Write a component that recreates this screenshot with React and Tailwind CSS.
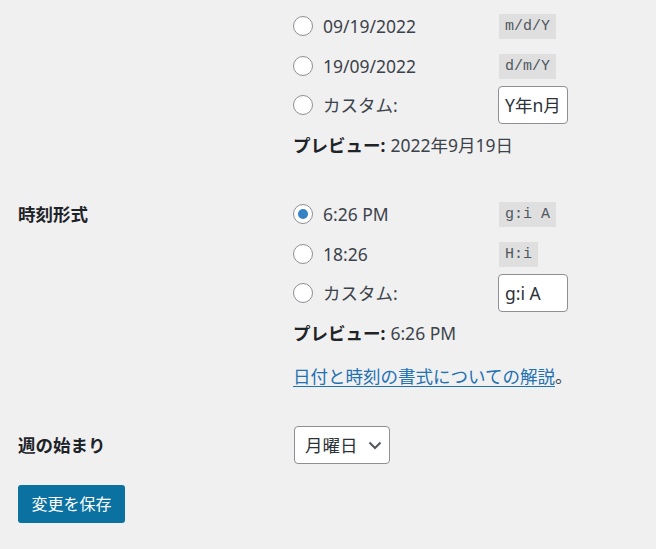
import React from "react";

const font = { fontFamily: '"Segoe UI", "Noto Sans", "Noto Sans CJK JP", sans-serif' };

function Radio({ checked }) {
  return (
    <span className="w-[20px] h-[20px] rounded-full border border-[#8c8f94] bg-white flex items-center justify-center shrink-0">
      {checked && <span className="w-[10px] h-[10px] rounded-full bg-[#3582c4]" />}
    </span>
  );
}

function Option({ checked, label, code, input, h = "h-[40px]" }) {
  return (
    <div className={`flex items-center ${h}`}>
      <div className="flex items-center w-[206px]">
        <Radio checked={checked} />
        <span className="ml-[10px] text-[17.5px] text-[#3c434a]">{label}</span>
      </div>
      {code && (
        <code className="font-['Liberation_Mono',monospace] text-[15px] leading-[25px] h-[25px] px-[6px] bg-[#dfdfe0] text-[#50575e]">
          {code}
        </code>
      )}
      {input && (
        <div className="w-[70px] h-[38px] -ml-[1px] border border-[#8c8f94] rounded-[4px] bg-white flex items-center pl-[6px] overflow-hidden text-[17.5px] text-[#2c3338] whitespace-nowrap">
          {input}
        </div>
      )}
    </div>
  );
}

function Preview({ value, h }) {
  return (
    <div className={`flex items-center ${h} text-[17.5px] text-[#3c434a]`}>
      <span className="font-bold text-[#1d2327]">プレビュー:</span>
      <span className="ml-[5px]">{value}</span>
    </div>
  );
}

export default function App() {
  return (
    <div className="w-[656px] h-[549px] bg-[#f0f0f1] overflow-hidden" style={font}>
      <div className="pt-[6px] pl-[293px]">
        <Option label="09/19/2022" code="m/d/Y" />
        <Option label="19/09/2022" code="d/m/Y" />
        <Option label="カスタム:" input="Y年n月" h="h-[38px]" />
        <Preview value="2022年9月19日" h="h-[42px]" />
      </div>

      <div className="flex mt-[28px]">
        <div className="w-[293px] pl-[18px] h-[40px] flex items-center text-[17.5px] font-bold text-[#1d2327]">時刻形式</div>
        <div>
          <Option checked label="6:26 PM" code="g:i A" />
          <Option label="18:26" code="H:i" />
          <Option label="カスタム:" input="g:i A" h="h-[38px]" />
          <Preview value="6:26 PM" h="h-[42px]" />
          <div className="h-[44px] flex items-center text-[17.5px] text-[#3c434a]">
            <a className="text-[#2271b1] underline underline-offset-[3px]">日付と時刻の書式についての解説</a>
            <span>。</span>
          </div>
        </div>
      </div>

      <div className="flex items-center mt-[28px]">
        <div className="w-[294px] pl-[18px] text-[17.5px] font-bold text-[#1d2327]">週の始まり</div>
        <div className="w-[96px] h-[38px] border border-[#8c8f94] rounded-[4px] bg-white flex items-center pl-[10px] pr-[6px] justify-between text-[17.5px] text-[#2c3338]">
          <span>月曜日</span>
          <svg width="16" height="16" viewBox="0 0 16 16" fill="none">
            <path d="M2.5 5.5l5.5 5.5 5.5-5.5" stroke="#50575e" strokeWidth="2" />
          </svg>
        </div>
      </div>

      <div className="pl-[18px] mt-[21px]">
        <button className="w-[107px] h-[38px] rounded-[3px] bg-[#0a71a1] text-white text-[16px]">変更を保存</button>
      </div>
    </div>
  );
}
